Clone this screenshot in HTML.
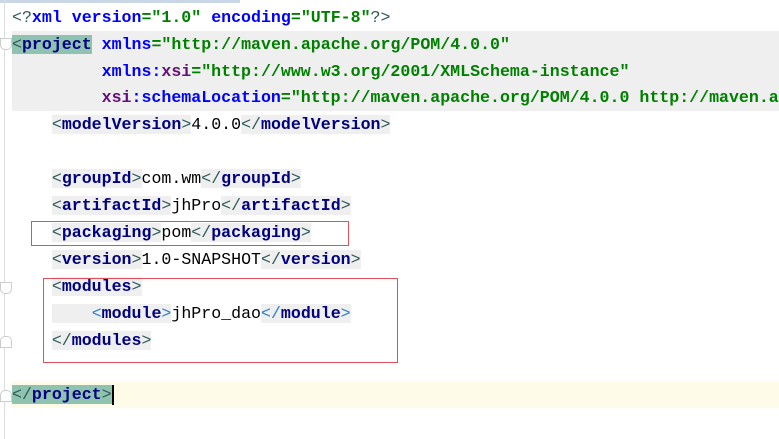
<!DOCTYPE html>
<html><head><meta charset="utf-8"><style>
html,body{margin:0;padding:0;overflow:hidden;}
body{width:779px;height:439px;background:#fff;position:relative;overflow:hidden;font-family:"Liberation Mono",monospace;font-size:16.6px;}
.gut{position:absolute;left:4px;top:0;width:1px;height:439px;background:#ddd;}
.topbar{position:absolute;left:0;top:0;width:240px;height:3px;background:#c9d6e6;}
.l{position:absolute;left:12px;right:0;overflow:hidden;height:27px;line-height:27px;white-space:pre;color:#000;}
.t{color:#000080;font-weight:bold;}
.b{color:#2e5a5a;}
.hb{color:#2a7fd0;}
.a{color:#0000ff;font-weight:bold;}
.p{color:#660e7a;font-weight:bold;}
.v{color:#008000;font-weight:bold;}
.g{background:#efefef;}
.h{background:#8fc3b0;}
.red{position:absolute;border:1px solid #e0505a;}
.fold{position:absolute;left:0;width:10px;height:10px;border:1px solid #ccc;border-radius:0 0 5px 5px;background:#fff;}
</style></head><body>
<div class="topbar"></div>
<div class="gut"></div>
<div style="position:absolute;left:12px;top:31px;width:767px;height:80px;background:#efefef"></div>
<div style="position:absolute;left:12px;top:381px;width:767px;height:27px;background:#fefbe8"></div>

<div class="l" style="top:4px"><span class="b">&lt;?</span><span class="a">xml version</span><span class="v">="1.0" </span><span class="a">encoding</span><span class="v">="UTF-8"</span><span class="b">?&gt;</span></div>
<div class="l" style="top:31px"><span class="h"><span class="b">&lt;</span><span class="t">project</span></span> <span class="a">xmlns</span><span class="v">="http://maven.apache.org/POM/4.0.0"</span></div>
<div class="l" style="top:58px">         <span class="a">xmlns</span><span class="a">:</span><span class="p">xsi</span><span class="v">="http://www.w3.org/2001/XMLSchema-instance"</span></div>
<div class="l" style="top:84px">         <span class="p">xsi</span><span class="a">:schemaLocation</span><span class="v">="http://maven.apache.org/POM/4.0.0 http://maven.a</span></div>
<div class="l" style="top:111px">    <span class="g"><span class="b">&lt;</span><span class="t">modelVersion</span><span class="b">&gt;</span></span>4.0.0<span class="g"><span class="b">&lt;/</span><span class="t">modelVersion</span><span class="b">&gt;</span></span></div>
<div class="l" style="top:165px">    <span class="g"><span class="b">&lt;</span><span class="t">groupId</span><span class="b">&gt;</span></span>com.wm<span class="g"><span class="b">&lt;/</span><span class="t">groupId</span><span class="b">&gt;</span></span></div>
<div class="l" style="top:192px">    <span class="g"><span class="b">&lt;</span><span class="t">artifactId</span><span class="b">&gt;</span></span>jhPro<span class="g"><span class="b">&lt;/</span><span class="t">artifactId</span><span class="b">&gt;</span></span></div>
<div class="l" style="top:219px">    <span class="g"><span class="b">&lt;</span><span class="t">packaging</span><span class="b">&gt;</span></span>pom<span class="g"><span class="b">&lt;/</span><span class="t">packaging</span><span class="b">&gt;</span></span></div>
<div class="l" style="top:246px">    <span class="g"><span class="b">&lt;</span><span class="t">version</span><span class="b">&gt;</span></span>1.0-SNAPSHOT<span class="g"><span class="b">&lt;/</span><span class="t">version</span><span class="b">&gt;</span></span></div>
<div class="l" style="top:273px">    <span class="g"><span class="b">&lt;</span><span class="t">modules</span><span class="b">&gt;</span></span></div>
<div class="l" style="top:300px">    <span class="g">    </span><span class="g"><span class="hb">&lt;</span><span class="t">module</span><span class="hb">&gt;</span></span>jhPro_dao<span class="g"><span class="hb">&lt;/</span><span class="t">module</span><span class="hb">&gt;</span></span></div>
<div class="l" style="top:327px">    <span class="g"><span class="b">&lt;/</span><span class="t">modules</span><span class="b">&gt;</span></span></div>
<div class="l" style="top:381px"><span class="h"><span class="b">&lt;/</span><span class="t">project</span><span class="b">&gt;</span></span><span style="display:inline-block;width:2px;height:20px;background:#000;vertical-align:middle"></span></div>

<div class="fold" style="top:38px"></div>
<div class="fold" style="top:282px"></div>
<div class="fold" style="top:336px;border-radius:5px 5px 0 0"></div>
<div class="fold" style="top:390px;border-radius:5px 5px 0 0"></div>

<div class="red" style="left:31px;top:221px;width:316px;height:23px"></div>
<div class="red" style="left:43px;top:278px;width:353px;height:83px"></div>
</body></html>
